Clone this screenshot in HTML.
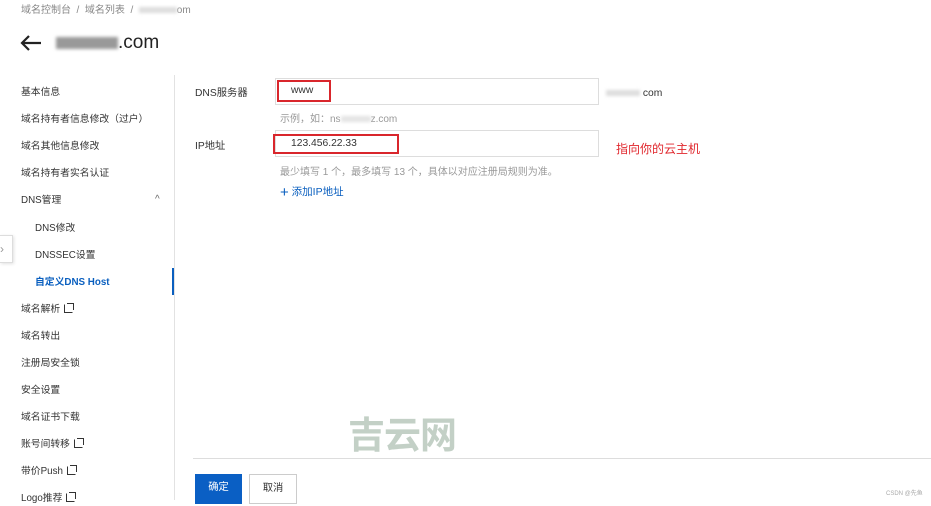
<!DOCTYPE html>
<html><head><meta charset="utf-8"><style>
*{margin:0;padding:0;box-sizing:border-box}
body{width:931px;height:500px;overflow:hidden;background:#fff;position:relative;font-family:"Liberation Sans","Noto Sans CJK SC",sans-serif;color:#333;font-size:10.3px}
.a{position:absolute;white-space:nowrap}
.m{left:21px;line-height:14px;font-size:9.8px}
.s{left:35px}
.ext{display:inline-block;width:9px;height:9px;border:1.5px solid #333;border-top-color:transparent;border-right-color:transparent;margin-left:4px;vertical-align:-1px;position:relative}
.ext:after{content:"";position:absolute;right:-2px;top:-2px;width:6px;height:6px;border-top:1.5px solid #333;border-right:1.5px solid #333}
.blur{display:inline-block;background:#ccc;filter:blur(1.5px);vertical-align:middle}
</style></head><body>
<div class="a" style="left:21px;top:1px;font-size:10px;color:#888">域名控制台 &nbsp;/&nbsp; 域名列表 &nbsp;/&nbsp; <span class="blur" style="width:38px;height:6px;background:#ddd"></span>om</div>
<svg class="a" style="left:19px;top:34px" width="24" height="18" viewBox="0 0 24 18"><path d="M22 9H3M10 2L3 9l7 7" fill="none" stroke="#222" stroke-width="2.2"/></svg>
<div class="a" style="left:56px;top:32px;font-size:19px;color:#222"><span class="blur" style="width:62px;height:12px;background:#999"></span>.com</div>

<div class="a" style="left:174px;top:75px;width:1px;height:425px;background:#e2e2e2"></div>
<div class="a" style="left:172px;top:268px;width:2px;height:27px;background:#0a5fbf"></div>
<div class="a" style="left:0;top:235px;width:13px;height:28px;border:1px solid #ddd;border-left:none;background:#fff;box-shadow:1px 1px 3px rgba(0,0,0,.12);color:#999;font-size:12px;line-height:26px">›</div>

<div class="a m" style="top:86px">基本信息</div>
<div class="a m" style="top:113px">域名持有者信息修改（过户）</div>
<div class="a m" style="top:140px">域名其他信息修改</div>
<div class="a m" style="top:167px">域名持有者实名认证</div>
<div class="a m" style="top:194px">DNS管理</div>
<div class="a" style="left:155px;top:194px;font-size:10px;color:#666">^</div>
<div class="a m s" style="top:222px">DNS修改</div>
<div class="a m s" style="top:249px">DNSSEC设置</div>
<div class="a m s" style="top:276px;color:#0a5fbf;font-weight:bold">自定义DNS Host</div>
<div class="a m" style="top:303px">域名解析<span class="ext"></span></div>
<div class="a m" style="top:330px">域名转出</div>
<div class="a m" style="top:357px">注册局安全锁</div>
<div class="a m" style="top:384px">安全设置</div>
<div class="a m" style="top:411px">域名证书下载</div>
<div class="a m" style="top:438px">账号间转移<span class="ext"></span></div>
<div class="a m" style="top:465px">带价Push<span class="ext"></span></div>
<div class="a m" style="top:492px">Logo推荐<span class="ext"></span></div>

<div class="a" style="left:195px;top:84px">DNS服务器</div>
<div class="a" style="left:275px;top:78px;width:324px;height:27px;border:1px solid #ddd"></div>
<div class="a" style="left:277px;top:80px;width:54px;height:22px;border:2px solid #d9262c"></div>
<div class="a" style="left:291px;top:85px">www</div>
<div class="a" style="left:606px;top:88px"><span class="blur" style="width:34px;height:6px;background:#ddd"></span> com</div>
<div class="a" style="left:280px;top:110px;color:#999;font-size:10px">示例，如：ns<span class="blur" style="width:30px;height:6px;background:#e4e4e4"></span>z.com</div>

<div class="a" style="left:195px;top:137px">IP地址</div>
<div class="a" style="left:275px;top:130px;width:324px;height:27px;border:1px solid #ddd"></div>
<div class="a" style="left:273px;top:134px;width:126px;height:20px;border:2px solid #d9262c"></div>
<div class="a" style="left:291px;top:138px">123.456.22.33</div>
<div class="a" style="left:616px;top:140px;color:#e0262c;font-size:12px">指向你的云主机</div>
<div class="a" style="left:280px;top:163px;color:#999;font-size:10px">最少填写 1 个，最多填写 13 个，具体以对应注册局规则为准。</div>
<div class="a" style="left:280px;top:184px;color:#0a5fbf;font-size:10.5px"><span style="font-size:15px;vertical-align:-2px">+</span> 添加IP地址</div>

<div class="a" style="left:348px;top:405px;font-size:37px;font-weight:bold;color:#c3d0c6;letter-spacing:-1px">吉云网</div>
<div class="a" style="left:193px;top:458px;width:738px;height:1px;background:#ddd"></div>
<div class="a" style="left:195px;top:474px;width:47px;height:30px;background:#0a5fc4;color:#fff;text-align:center;line-height:28px">确定</div>
<div class="a" style="left:249px;top:474px;width:48px;height:30px;border:1px solid #ccc;text-align:center;line-height:28px">取消</div>
<div class="a" style="left:886px;top:488px;font-size:6px;color:#aaa">CSDN @先鱼</div>
</body></html>
